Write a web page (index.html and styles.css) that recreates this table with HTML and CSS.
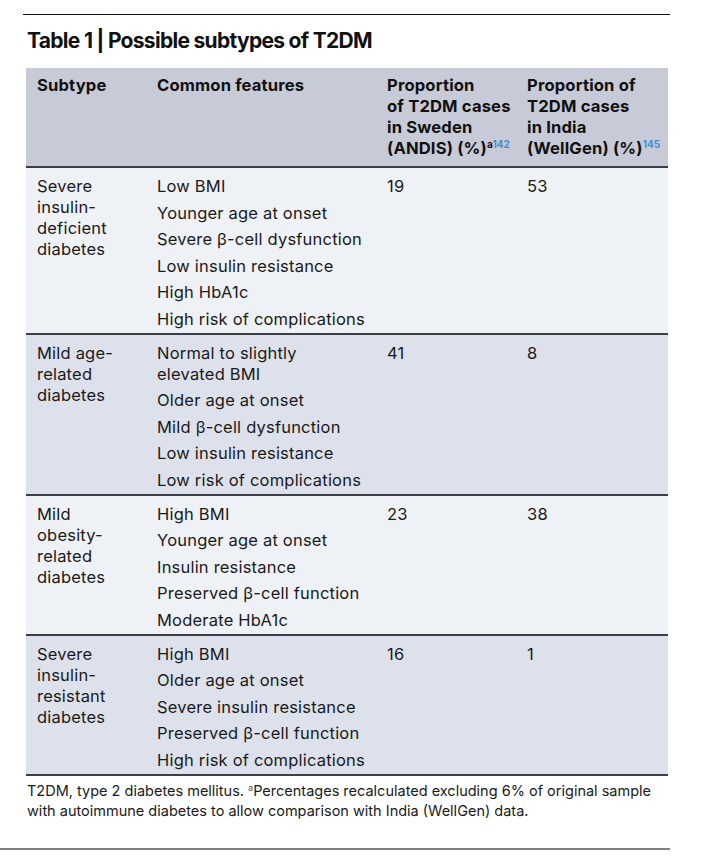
FILE: index.html
```html
<!DOCTYPE html>
<html lang="en">
<head>
<meta charset="utf-8">
<title>Table 1 | Possible subtypes of T2DM</title>
<link rel="stylesheet" href="styles.css">
</head>
<body>
<div class="page">
  <div class="top-rule"></div>
  <div class="content">
    <h1 class="title">Table 1 | Possible subtypes of T2DM</h1>
    <div class="table">
      <div class="row head">
        <div class="cell">Subtype</div>
        <div class="cell">Common features</div>
        <div class="cell">Proportion<br>of T2DM cases<br>in Sweden<br>(ANDIS) (%)<sup class="sup"><span class="sup-a">a</span><span class="ref">142</span></sup></div>
        <div class="cell">Proportion of<br>T2DM cases<br>in India<br>(WellGen) (%)<sup class="sup"><span class="ref">145</span></sup></div>
      </div>
      <div class="row odd">
        <div class="cell">Severe<br>insulin-<br>deficient<br>diabetes</div>
        <div class="cell features">
          <div>Low BMI</div>
          <div>Younger age at onset</div>
          <div>Severe β-cell dysfunction</div>
          <div>Low insulin resistance</div>
          <div>High HbA1c</div>
          <div>High risk of complications</div>
        </div>
        <div class="cell">19</div>
        <div class="cell">53</div>
      </div>
      <div class="row even">
        <div class="cell">Mild age-<br>related<br>diabetes</div>
        <div class="cell features">
          <div>Normal to slightly<br>elevated BMI</div>
          <div>Older age at onset</div>
          <div>Mild β-cell dysfunction</div>
          <div>Low insulin resistance</div>
          <div>Low risk of complications</div>
        </div>
        <div class="cell">41</div>
        <div class="cell">8</div>
      </div>
      <div class="row odd">
        <div class="cell">Mild<br>obesity-<br>related<br>diabetes</div>
        <div class="cell features">
          <div>High BMI</div>
          <div>Younger age at onset</div>
          <div>Insulin resistance</div>
          <div>Preserved β-cell function</div>
          <div>Moderate HbA1c</div>
        </div>
        <div class="cell">23</div>
        <div class="cell">38</div>
      </div>
      <div class="row even">
        <div class="cell">Severe<br>insulin-<br>resistant<br>diabetes</div>
        <div class="cell features">
          <div>High BMI</div>
          <div>Older age at onset</div>
          <div>Severe insulin resistance</div>
          <div>Preserved β-cell function</div>
          <div>High risk of complications</div>
        </div>
        <div class="cell">16</div>
        <div class="cell">1</div>
      </div>
    </div>
    <p class="note">T2DM, type 2 diabetes mellitus. <sup class="note-sup">a</sup>Percentages recalculated excluding 6% of original sample with autoimmune diabetes to allow comparison with India (WellGen) data.</p>
  </div>
  <div class="bottom-rule"></div>
</div>
</body>
</html>
```
FILE: styles.css
```css
html, body {
  margin: 0;
  padding: 0;
  background: #ffffff;
}

body {
  font-family: Inter, "Liberation Sans", sans-serif;
  color: #1a1a1a;
}

.page {
  width: 670px;
  padding-top: 14px;
}

.top-rule {
  margin-left: 23px;
  height: 1px;
  background: #111111;
}

.content {
  padding-left: 26px;
  padding-right: 2px;
}

.title {
  margin: 12px 0 0 1px;
  font-size: 21px;
  line-height: 28px;
  font-weight: 700;
  letter-spacing: -0.7px;
  color: #111111;
  height: 41px;
}

.table {
  width: 642px;
}

.row {
  display: grid;
  grid-template-columns: 120px 230px 140px 152px;
}

.cell {
  padding: 8px 11px 3px;
  font-size: 16.5px;
  line-height: 21px;
  letter-spacing: 0.2px;
}

.head {
  background: #c7cbd7;
  border-bottom: 2px solid #3a3f48;
}

.head .cell {
  font-weight: 700;
  font-size: 16.6px;
  letter-spacing: 0.15px;
  padding-top: 7px;
  padding-bottom: 7px;
  padding-right: 4px;
  color: #111111;
}

.odd {
  background: #eef1f5;
  border-bottom: 2px solid #3a3f48;
}

.even {
  background: #dde1eb;
  border-bottom: 2px solid #3a3f48;
}

.features {
  display: flex;
  flex-direction: column;
  gap: 5.5px;
}

.sup {
  font-size: 10px;
  line-height: 0;
  letter-spacing: 0;
  vertical-align: 6px;
}

.sup-a {
  color: #111111;
}

.ref {
  color: #3e8fd2;
}

.note {
  margin: 5px 0 0 1px;
  font-size: 14.5px;
  line-height: 20px;
  color: #1a1a1a;
}

.note-sup {
  font-size: 9px;
  line-height: 0;
  vertical-align: 5px;
  color: #555555;
}

.bottom-rule {
  margin-top: 27px;
  height: 2px;
  background: #808080;
}
```
